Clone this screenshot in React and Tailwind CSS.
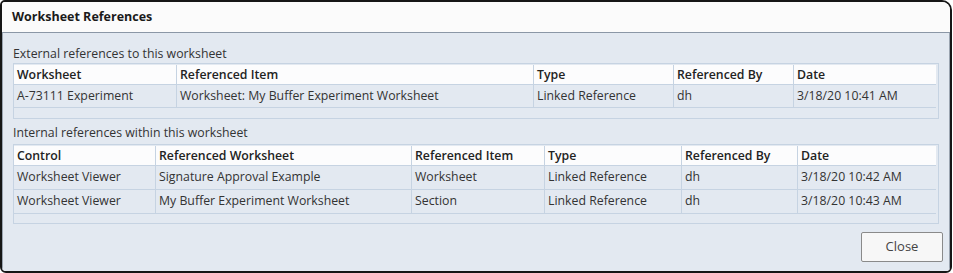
import React from 'react';

const external = {
  widths: [162, 357, 140, 120, 143],
  headers: ['Worksheet', 'Referenced Item', 'Type', 'Referenced By', 'Date'],
  rows: [
    ['A-73111 Experiment', 'Worksheet: My Buffer Experiment Worksheet', 'Linked Reference', 'dh', '3/18/20 10:41 AM'],
  ],
};

const internal = {
  widths: [141, 256, 133, 137, 116, 139],
  headers: ['Control', 'Referenced Worksheet', 'Referenced Item', 'Type', 'Referenced By', 'Date'],
  rows: [
    ['Worksheet Viewer', 'Signature Approval Example', 'Worksheet', 'Linked Reference', 'dh', '3/18/20 10:42 AM'],
    ['Worksheet Viewer', 'My Buffer Experiment Worksheet', 'Section', 'Linked Reference', 'dh', '3/18/20 10:43 AM'],
  ],
};

const RefTable = ({ data, headH, rowH, strip }) => (
  <div className="border border-[#c6d3e2] pt-px pr-[2px]" style={{ paddingBottom: strip }}>
    <div className="w-[922px]">
      <div className="flex bg-[#fcfcfd] border-b border-[#c6d3e2]" style={{ height: headH }}>
        {data.headers.map((h, i) => (
          <div
            key={h}
            className={`shrink-0 flex items-center pt-px font-semibold text-[12.3px] text-[#222] px-[3px] ${i > 0 ? 'border-l border-[#c6d3e2]' : ''}`}
            style={{ width: data.widths[i] }}
          >
            {h}
          </div>
        ))}
      </div>
      {data.rows.map((r, ri) => (
        <div key={ri} className="flex bg-[#e3e9f1] border-b border-[#c6d3e2]" style={{ height: rowH }}>
          {r.map((c, i) => (
            <div
              key={i}
              className={`shrink-0 flex items-center text-[12.3px] text-[#333] px-[3px] whitespace-nowrap ${i > 0 ? 'border-l border-[#c6d3e2]' : ''}`}
              style={{ width: data.widths[i] }}
            >
              {c}
            </div>
          ))}
        </div>
      ))}
    </div>
  </div>
);

export default function App() {
  return (
    <div className="w-[953px] h-[273px] bg-white" style={{ fontFamily: '"Open Sans", "Liberation Sans", sans-serif' }}>
      <div className="w-[952px] h-[273px] border-2 border-[#161616] rounded-tl-[5px] rounded-tr-[10px] rounded-b-[6px] overflow-hidden flex flex-col">
        <div className="h-[31px] shrink-0 bg-[#fbfbfb] border-b border-[#8b97a6] flex items-center px-[10px]">
          <span className="text-[12.5px] font-bold text-[#1a1a1a]">Worksheet References</span>
        </div>
        <div className="flex-1 bg-[#e3e9f1] border-r border-l border-[#9aa4b0] px-[10px] pt-[13px] pb-[9px] flex flex-col">
          <div className="text-[12.3px] text-[#333] leading-[16px] mb-[1px]">External references to this worksheet</div>
          <RefTable data={external} headH={20} rowH={23} strip={10} />
          <div className="text-[12.3px] text-[#333] leading-[16px] mt-[6px] mb-[3px]">Internal references within this worksheet</div>
          <RefTable data={internal} headH={20} rowH={24} strip={9} />
          <div className="flex-1 flex items-end justify-end -mr-[4px]">
            <button className="w-[82px] h-[30px] bg-[#f7f7f7] border border-[#8a8a8a] rounded-[2px] text-[13px] text-[#444]">
              Close
            </button>
          </div>
        </div>
      </div>
    </div>
  );
}
